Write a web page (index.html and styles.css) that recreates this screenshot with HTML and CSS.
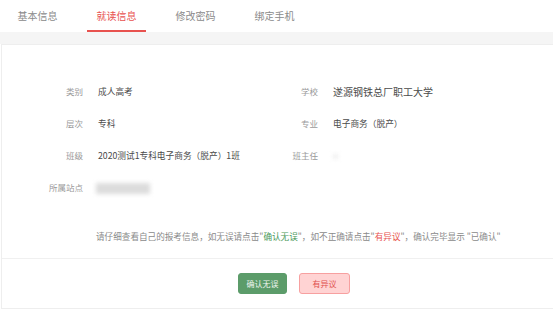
FILE: index.html
```html
<!DOCTYPE html>
<html lang="zh-CN">
<head>
    <meta charset="UTF-8">
    <meta name="viewport" content="width=device-width, initial-scale=1.0">
    <title>就读信息</title>
    <link rel="stylesheet" href="styles.css">
</head>
<body>
    <div class="tabs">
        <div class="tab">基本信息</div>
        <div class="tab active">就读信息</div>
        <div class="tab">修改密码</div>
        <div class="tab">绑定手机</div>
    </div>
    <div class="gap-band"></div>

    <div class="card">
        <div class="info-section">
            <div class="info-grid">
                <div class="field">
                    <span class="label">类别</span>
                    <span class="value">成人高考</span>
                </div>
                <div class="field">
                    <span class="label">学校</span>
                    <span class="value school">遂源钢铁总厂职工大学</span>
                </div>
                <div class="field">
                    <span class="label">层次</span>
                    <span class="value">专科</span>
                </div>
                <div class="field">
                    <span class="label">专业</span>
                    <span class="value">电子商务（脱产）</span>
                </div>
                <div class="field">
                    <span class="label">班级</span>
                    <span class="value">2020测试1专科电子商务（脱产）1班</span>
                </div>
                <div class="field">
                    <span class="label">班主任</span>
                    <span class="value"><span class="blur blur-small"></span></span>
                </div>
                <div class="field">
                    <span class="label">所属站点</span>
                    <span class="value"><span class="blur blur-wide"></span></span>
                </div>
            </div>
            <p class="notice">请仔细查看自己的报考信息，如无误请点击"<span class="ok">确认无误</span>"，如不正确请点击"<span class="bad">有异议</span>"，确认完毕显示 "已确认"</p>
        </div>
        <div class="actions">
            <button class="btn btn-confirm">确认无误</button>
            <button class="btn btn-object">有异议</button>
        </div>
    </div>
</body>
</html>
```

FILE: styles.css
```css
html, body {
    margin: 0;
    padding: 0;
}

body {
    font-family: "Noto Sans CJK SC", "Noto Sans", sans-serif;
    background: #fff;
    color: #555;
}

/* tab bar */
.tabs {
    display: flex;
    gap: 20px;
    height: 32px;
    padding-left: 8px;
}

.tab {
    width: 59px;
    text-align: center;
    font-size: 10px;
    line-height: 31px;
    color: #8a8a8a;
    border-bottom: 2px solid transparent;
    box-sizing: border-box;
    height: 32px;
}

.tab.active {
    color: #e8524f;
    border-bottom-color: #e8524f;
}

.gap-band {
    height: 12px;
    background: #f5f5f5;
}

/* card */
.card {
    margin-left: 1px;
    border: 1px solid #eeeeee;
    border-right: none;
    background: #fff;
}

.info-section {
    padding-top: 30px;
}

.info-grid {
    display: grid;
    grid-template-columns: 235px 235px;
    grid-auto-rows: 32px;
    padding-left: 21px;
}

.field {
    display: flex;
    align-items: center;
    gap: 15px;
}

.label {
    width: 60px;
    text-align: right;
    font-size: 8.5px;
    color: #9a9a9a;
}

.value {
    font-size: 8.7px;
    color: #4a4a4a;
}

.value.school {
    font-size: 10px;
}

.blur {
    display: inline-block;
    background: #dcdcdc;
    filter: blur(2px);
    vertical-align: middle;
}

.blur-wide {
    width: 54px;
    height: 11px;
    margin-left: -2px;
}

.blur-small {
    width: 5px;
    height: 5px;
    opacity: 0.5;
}

.notice {
    margin: 0;
    padding: 27px 0 16px 94px;
    font-size: 8.6px;
    color: #8a8a8a;
    white-space: nowrap;
}

.notice .ok {
    color: #4c9a5a;
}

.notice .bad {
    color: #e8524f;
}

.actions {
    display: flex;
    gap: 12px;
    padding: 14px 0 14px 236px;
    border-top: 1px solid #f0f0f0;
}

.btn {
    width: 49px;
    height: 21px;
    border-radius: 3px;
    font-family: inherit;
    font-size: 8px;
    padding: 0;
}

.btn-confirm {
    background: #5c9c6a;
    color: #eef5ef;
    border: 1px solid #5c9c6a;
}

.btn-object {
    width: 51px;
    background: #ffd3d3;
    color: #e0504e;
    border: 1px solid #f7a0a0;
}
```
